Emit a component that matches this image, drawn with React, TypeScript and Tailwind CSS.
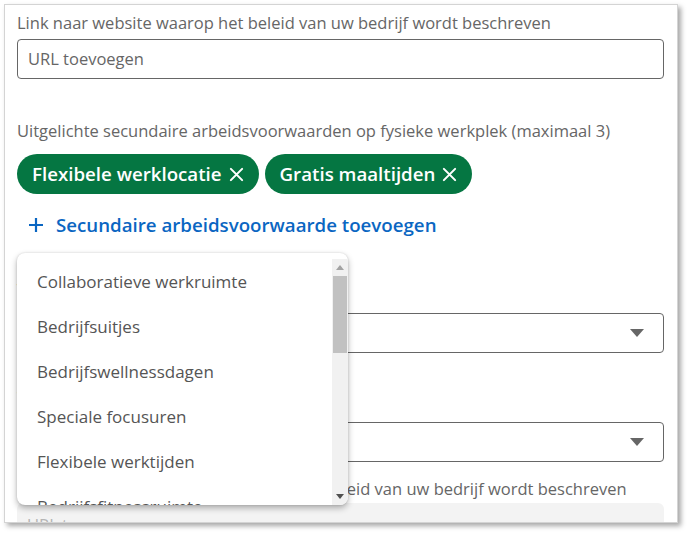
import React from "react";

const items = [
  "Collaboratieve werkruimte",
  "Bedrijfsuitjes",
  "Bedrijfswellnessdagen",
  "Speciale focusuren",
  "Flexibele werktijden",
  "Bedrijfsfitnessruimte",
];

function XIcon() {
  return (
    <svg width="15" height="15" viewBox="0 0 16 16" className="shrink-0">
      <path d="M2 2 L14 14 M14 2 L2 14" stroke="white" strokeWidth="2.2" strokeLinecap="round" />
    </svg>
  );
}

function Caret() {
  return (
    <svg width="14" height="8" viewBox="0 0 14 8">
      <path d="M0 0 L14 0 L7 8 Z" fill="#666666" />
    </svg>
  );
}

export default function App() {
  return (
    <div
      className="w-[689px] h-[534px] bg-white pl-[4px] pt-[4px]"
      style={{ fontFamily: '"Open Sans", "Noto Sans", sans-serif' }}
    >
      <div className="relative w-[674px] h-[519px] border border-[#d4d4d4] bg-white shadow-[3px_3px_5px_rgba(0,0,0,0.35)] overflow-hidden pl-[12px] pr-[13px] pt-[6px] flex flex-col">
        <div className="h-6 leading-6 text-[16.5px] text-[#666666] whitespace-nowrap">
          Link naar website waarop het beleid van uw bedrijf wordt beschreven
        </div>
        <div className="mt-[4px] h-[40px] shrink-0 border border-[#666666] rounded-[4px] flex items-center px-[10px] text-[16.5px] text-[#666666]">
          URL toevoegen
        </div>

        <div className="mt-[40px] h-6 leading-6 text-[16.5px] text-[#666666] whitespace-nowrap">
          Uitgelichte secundaire arbeidsvoorwaarden op fysieke werkplek (maximaal 3)
        </div>
        <div className="mt-[11px] h-[40px] shrink-0 flex gap-[6px]">
          <div className="h-[40px] rounded-full bg-[#057642] text-white font-semibold text-[18.7px] flex items-center gap-[7px] pl-[15px] pr-[15px] whitespace-nowrap">
            <span>Flexibele werklocatie</span>
            <XIcon />
          </div>
          <div className="h-[40px] rounded-full bg-[#057642] text-white font-semibold text-[18.7px] flex items-center gap-[7px] pl-[15px] pr-[15px] whitespace-nowrap">
            <span>Gratis maaltijden</span>
            <XIcon />
          </div>
        </div>
        <div className="mt-[19px] h-6 flex items-center gap-[12px] pl-[11px] text-[#0a66c2] font-semibold text-[18.7px] whitespace-nowrap">
          <svg width="16" height="16" viewBox="0 0 16 16">
            <path d="M8 1 V15 M1 8 H15" stroke="#0a66c2" strokeWidth="2.2" />
          </svg>
          <span>Secundaire arbeidsvoorwaarde toevoegen</span>
        </div>

        <div className="mt-[41px] h-6 leading-6 text-[16.5px] text-[#666666]">Type werkplek</div>
        <div className="mt-[11px] h-[40px] shrink-0 border border-[#666666] rounded-[4px] flex items-center justify-end pr-[19px]">
          <Caret />
        </div>

        <div className="mt-[33px] h-6 leading-6 text-[16.5px] text-[#666666]">Werkplekbeleid</div>
        <div className="mt-[12px] h-[40px] shrink-0 border border-[#666666] rounded-[4px] flex items-center justify-end pr-[19px]">
          <Caret />
        </div>

        <div className="mt-[15px] h-6 leading-6 text-[16.5px] text-[#666666] whitespace-nowrap">
          Link naar website waarop het thuiswerkbeleid van uw bedrijf wordt beschreven
        </div>
        <div className="mt-[2px] h-[44px] shrink-0 bg-[#f3f3f3] rounded-[6px] flex items-center px-[10px] text-[16.5px] text-[#b5b5b5]">
          URL toevoegen
        </div>

        <div className="absolute left-[12px] top-[248px] w-[331px] h-[252px] bg-white rounded-[8px] shadow-[0_3px_6px_rgba(0,0,0,0.3),0_0_2px_rgba(0,0,0,0.15)] overflow-hidden flex">
          <div className="flex-1 pt-[6px] overflow-hidden">
            {items.map((it) => (
              <div key={it} className="h-[45px] flex items-center pl-[20px] text-[17px] text-[#555555] whitespace-nowrap">
                {it}
              </div>
            ))}
          </div>
          <div className="w-[16px] mt-[6px] bg-[#f1f1f1] flex flex-col items-center">
            <div className="h-[17px] flex items-center justify-center">
              <svg width="8" height="5" viewBox="0 0 8 5">
                <path d="M0 5 L8 5 L4 0 Z" fill="#a3a3a3" />
              </svg>
            </div>
            <div className="w-[14px] h-[77px] bg-[#c1c1c1]" />
            <div className="flex-1" />
            <div className="h-[17px] flex items-center justify-center">
              <svg width="8" height="5" viewBox="0 0 8 5">
                <path d="M0 0 L8 0 L4 5 Z" fill="#505050" />
              </svg>
            </div>
          </div>
        </div>
      </div>
    </div>
  );
}
